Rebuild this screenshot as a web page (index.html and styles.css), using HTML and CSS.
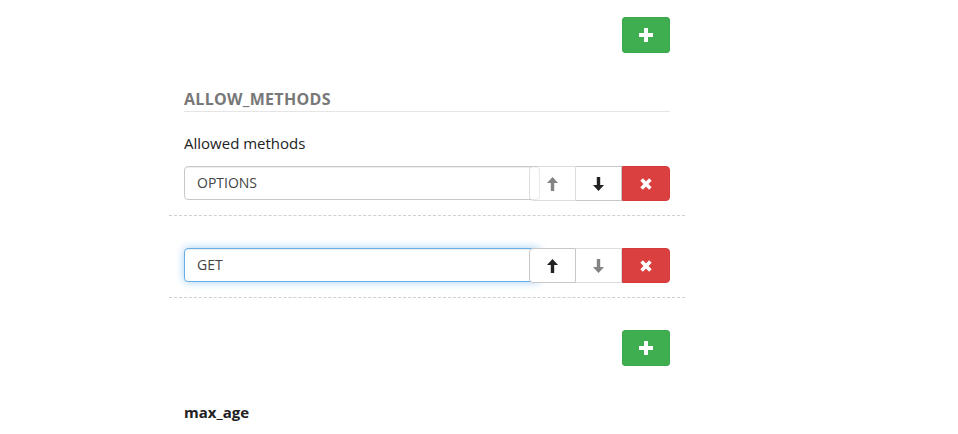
FILE: index.html
```html
<!DOCTYPE html>
<html>
<head>
<meta charset="utf-8">
<link rel="stylesheet" href="styles.css">
</head>
<body>
<div class="wrap">
  <div class="pad add-top">
    <button class="btn-add" type="button" aria-label="Add">
      <svg width="14" height="14" viewBox="0 0 14 14"><path d="M5 0h4v5H14v4H9V14H5V9H0V5h5z" fill="#fff"/></svg>
    </button>
  </div>

  <div class="pad">
    <h3 class="section-title">ALLOW_METHODS</h3>
    <div class="field-label">Allowed methods</div>
  </div>

  <div class="item first">
    <div class="row">
      <input class="txt" type="text" value="OPTIONS">
      <div class="btns">
        <button class="btn btn-up" disabled type="button">
          <svg width="11" height="14" viewBox="0 0 11 14"><path d="M5.5 0L11 6H7.2V14H3.8V6H0z" fill="#333"/></svg>
        </button>
        <button class="btn btn-down" type="button">
          <svg width="11" height="14" viewBox="0 0 11 14"><path d="M5.5 14L11 8H7.2V0H3.8V8H0z" fill="#222"/></svg>
        </button>
        <button class="btn btn-del" type="button">
          <svg width="12" height="12" viewBox="0 0 12 12"><path d="M1.6 1.6L10.4 10.4M10.4 1.6L1.6 10.4" stroke="#fff" stroke-width="3.6"/></svg>
        </button>
      </div>
    </div>
  </div>

  <div class="item">
    <div class="row">
      <input class="txt focused" type="text" value="GET">
      <div class="btns">
        <button class="btn btn-up" type="button">
          <svg width="11" height="14" viewBox="0 0 11 14"><path d="M5.5 0L11 6H7.2V14H3.8V6H0z" fill="#222"/></svg>
        </button>
        <button class="btn btn-down" disabled type="button">
          <svg width="11" height="14" viewBox="0 0 11 14"><path d="M5.5 14L11 8H7.2V0H3.8V8H0z" fill="#333"/></svg>
        </button>
        <button class="btn btn-del" type="button">
          <svg width="12" height="12" viewBox="0 0 12 12"><path d="M1.6 1.6L10.4 10.4M10.4 1.6L1.6 10.4" stroke="#fff" stroke-width="3.6"/></svg>
        </button>
      </div>
    </div>
  </div>

  <div class="pad add-bottom">
    <button class="btn-add" type="button" aria-label="Add">
      <svg width="14" height="14" viewBox="0 0 14 14"><path d="M5 0h4v5H14v4H9V14H5V9H0V5h5z" fill="#fff"/></svg>
    </button>
  </div>

  <div class="pad">
    <div class="next-label">max_age</div>
  </div>
</div>
</body>
</html>
```

FILE: styles.css
```css
* { box-sizing: border-box; }
html, body { margin: 0; padding: 0; background: #fff; }
body {
  font-family: "Open Sans", "Liberation Sans", sans-serif;
  color: #222;
}
.wrap {
  width: 516px;
  margin-left: 169px;
}
.pad { padding: 0 15px; }
.add-top {
  padding-top: 17px;
  display: flex;
  justify-content: flex-end;
}
.add-bottom {
  padding-top: 32px;
  display: flex;
  justify-content: flex-end;
}
.btn-add {
  width: 48px;
  height: 36px;
  border: 1px solid #3aa84b;
  border-radius: 3px;
  background: #3fae51;
  display: flex;
  align-items: center;
  justify-content: center;
  padding: 0;
}
.section-title {
  margin: 36px 0 0;
  font-size: 16px;
  letter-spacing: 0.3px;
  line-height: 20px;
  font-weight: 700;
  color: #787878;
  padding-bottom: 2px;
  border-bottom: 1px solid #e5e5e5;
}
.field-label {
  margin-top: 21px;
  font-size: 15px;
  line-height: 20px;
  color: #222;
}
.item {
  padding: 32px 15px 14px;
  border-bottom: 1px dashed #d0d0d0;
}
.item.first { padding-top: 13px; }
.row {
  display: flex;
  align-items: flex-start;
}
.txt {
  width: 356px;
  height: 34px;
  margin: 0;
  border: 1px solid #c8c8c8;
  border-radius: 4px;
  padding: 0 12px 1px;
  font-family: "Open Sans", "Liberation Sans", sans-serif;
  font-size: 14px;
  color: #444;
  background: #fff;
  outline: none;
  box-shadow: inset 0 1px 1px rgba(0,0,0,.075);
}
.txt.focused {
  border-color: #66afe9;
  box-shadow: inset 0 1px 1px rgba(0,0,0,.075), 0 0 8px rgba(102,175,233,.6);
}
.btns {
  display: flex;
  margin-left: -11px;
}
.btn {
  height: 35px;
  margin: 0;
  padding: 0;
  border: 1px solid #c8c8c8;
  background: #fff;
  display: flex;
  align-items: center;
  justify-content: center;
}
.btn[disabled] { opacity: .6; }
.btn-up {
  width: 47px;
  border-radius: 4px 0 0 4px;
}
.btn-down {
  width: 46px;
  border-left: 0;
}
.btn-del {
  width: 48px;
  border: 1px solid #d43a3a;
  background: #db4040;
  border-radius: 0 4px 4px 0;
}
.next-label {
  margin-top: 36px;
  font-size: 15px;
  line-height: 20px;
  font-weight: 700;
  color: #222;
}
```
